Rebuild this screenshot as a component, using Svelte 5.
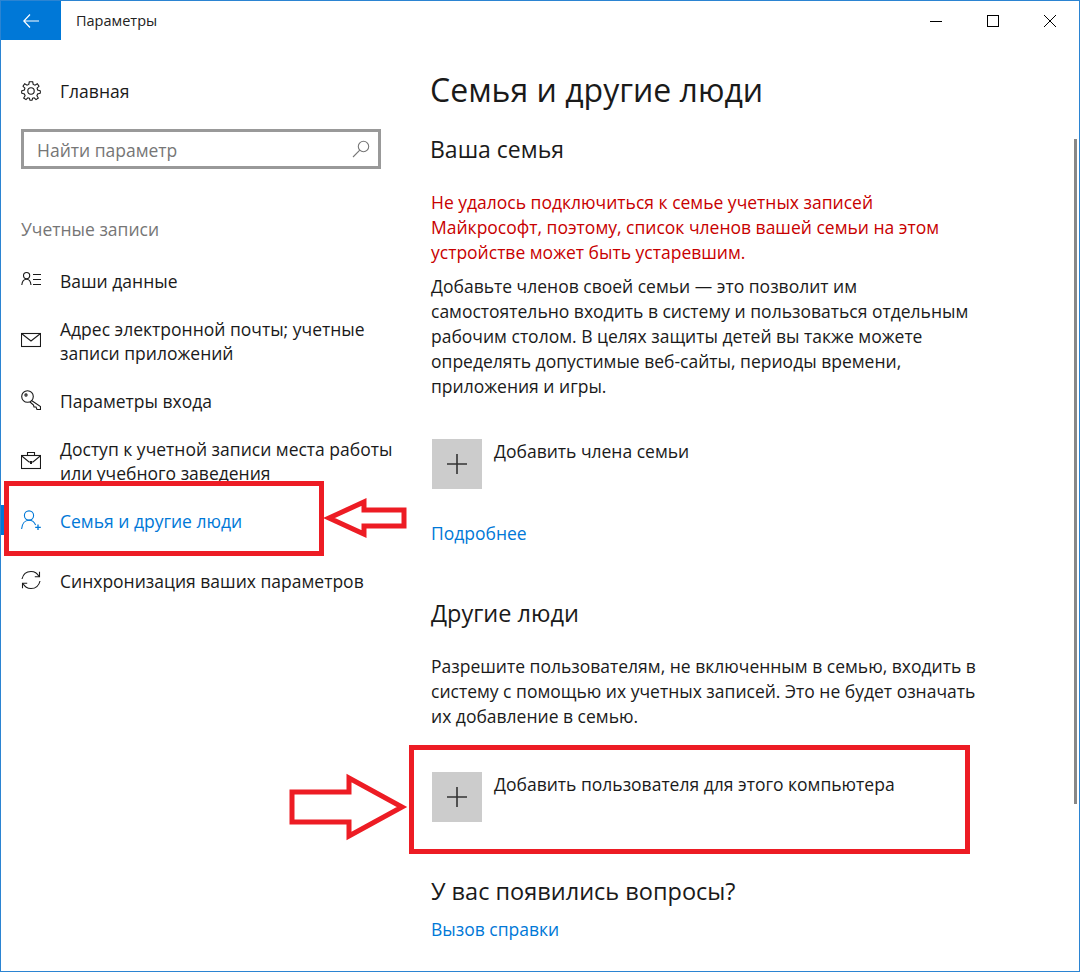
<script>
	const navItems = [
		{ id: 'data', lines: 'Ваши данные' },
		{ id: 'mail', lines: 'Адрес электронной почты; учетные записи приложений' },
		{ id: 'key', lines: 'Параметры входа' },
		{ id: 'work', lines: 'Доступ к учетной записи места работы или учебного заведения' },
		{ id: 'family', lines: 'Семья и другие люди', active: true },
		{ id: 'sync', lines: 'Синхронизация ваших параметров' }
	];
</script>

{#snippet icon(id)}
	<svg class="nav-icon" viewBox="0 0 20 20" fill="none" stroke="currentColor" stroke-width="1.1">
		{#if id === 'data'}
			<circle cx="5.6" cy="5.6" r="3.1" />
			<path d="M0.8 15 C1.2 11 3 9.3 5.6 9.3 C8.2 9.3 9.6 11 10 15" />
			<path d="M12 4.5H20M12 9.5H20M12 14.5H20" />
		{:else if id === 'mail'}
			<rect x="0.5" y="3.5" width="19" height="13" />
			<path d="M0.8 3.8 L10 11 L19.2 3.8" />
		{:else if id === 'key'}
			<circle cx="6.5" cy="6.5" r="5.8" />
			<circle cx="5" cy="5" r="1.1" />
			<path d="M10.5 10.5 L19.5 16.5 V19.5 H16 L15 17 H13 L12.5 15 L9 12" />
		{:else if id === 'work'}
			<rect x="0.5" y="5.5" width="19" height="13" />
			<path d="M6.5 5.5V2.5H13.5V5.5M0.8 6 L8 12 H12 L19.2 6" />
			<path d="M10 11V14" stroke-width="2" />
		{:else if id === 'family'}
			<circle cx="8" cy="5.5" r="4.6" />
			<path d="M0.6 19 C1 13.5 4 10.2 8 10.2 C11 10.2 13.4 12 14.6 15" />
			<path d="M17 14.5V20M14.2 17.3H19.8" stroke-width="1.3" />
		{:else}
			<path d="M1 9 C2 4.5 5.5 1.5 10 1.5 C13.5 1.5 16.5 3.5 18 6.5" />
			<path d="M18.5 1.8V6.8H13.8" />
			<path d="M19 11 C18 15.5 14.5 18.5 10 18.5 C6.5 18.5 3.5 16.5 2 13.5" />
			<path d="M1.5 18.2V13.2H6.2" />
		{/if}
	</svg>
{/snippet}

{#snippet addButton(label)}
	<div class="add">
		<span class="tile">
			<svg viewBox="0 0 20 20" width="20" height="20" stroke="#333" stroke-width="1.6">
				<path d="M10 0V20M0 10H20" />
			</svg>
		</span>
		<span class="add-label">{label}</span>
	</div>
{/snippet}

<div class="window">
	<header class="titlebar">
		<div class="back">
			<svg viewBox="0 0 16 14" width="16" height="14" fill="none" stroke="#fff" stroke-width="1.2">
				<path d="M0.5 7H16M7 0.5L0.8 7L7 13.5" />
			</svg>
		</div>
		<span class="title">Параметры</span>
		<div class="controls">
			<svg viewBox="0 0 12 12" width="12" height="12" stroke="#000" fill="none">
				<path d="M0 6.5H12" />
			</svg>
			<svg viewBox="0 0 12 12" width="12" height="12" stroke="#000" fill="none">
				<rect x="0.5" y="0.5" width="11" height="11" />
			</svg>
			<svg viewBox="0 0 12 12" width="12" height="12" stroke="#000" fill="none">
				<path d="M0 0L12 12M12 0L0 12" />
			</svg>
		</div>
	</header>

	<div class="body">
		<aside class="sidebar">
			<div class="home">
				<svg class="nav-icon" viewBox="0 0 20 20" fill="none" stroke="currentColor" stroke-width="1.1">
					<circle cx="10" cy="10" r="3.2" />
					<path d="M8.3 0.8H11.7L12.2 3.4L14 4.2L16.3 2.8L18 5.3L16.1 7.2L16.6 9L19.3 9.8V12.2L16.6 13L15.9 14.8L17.3 17L15 18.6L13.2 16.8L11.6 17.3L11 19.3H9L8.4 17.3L6.8 16.8L5 18.6L2.7 17L4.1 14.8L3.4 13L0.7 12.2V9.8L3.4 9L3.9 7.2L2 5.3L3.7 2.8L6 4.2L7.8 3.4Z" />
				</svg>
				<span class="nudge">Главная</span>
			</div>

			<div class="search">
				<span class="nudge">Найти параметр</span>
				<svg viewBox="0 0 18 18" width="18" height="18" fill="none" stroke="#777" stroke-width="1.1">
					<circle cx="11.5" cy="6.5" r="5.2" />
					<path d="M7.8 10.2L1 17" />
				</svg>
			</div>

			<div class="group nudge">Учетные записи</div>

			<nav class="nav">
				{#each navItems as item (item.id)}
					<div class="nav-item" class:active={item.active}>
						{@render icon(item.id)}
						<span class="nudge">{item.lines}</span>
					</div>
				{/each}
			</nav>
		</aside>

		<main class="content">
			<h1>Семья и другие люди</h1>
			<h2 class="family-head">Ваша семья</h2>
			<p class="error">Не удалось подключиться к семье учетных записей Майкрософт, поэтому, список членов вашей семьи на этом устройстве может быть устаревшим.</p>
			<p class="intro">Добавьте членов своей семьи — это позволит им самостоятельно входить в систему и пользоваться отдельным рабочим столом. В целях защиты детей вы также можете определять допустимые веб-сайты, периоды времени, приложения и игры.</p>
			{@render addButton('Добавить члена семьи')}
			<a class="link more" href="#more">Подробнее</a>
			<h2 class="others-head">Другие люди</h2>
			<p class="others">Разрешите пользователям, не включенным в семью, входить в систему с помощью их учетных записей. Это не будет означать их добавление в семью.</p>
			{@render addButton('Добавить пользователя для этого компьютера')}
			<h2 class="help-head">У вас появились вопросы?</h2>
			<a class="link help" href="#help">Вызов справки</a>
		</main>
	</div>

	<div class="scrollbar"></div>
	<div class="mark mark-nav"></div>
	<div class="mark mark-add"></div>
	<svg class="arrows" viewBox="0 0 1080 972" fill="none" stroke="#ed1c24" stroke-width="5" stroke-linejoin="miter">
		<path d="M329 518L364 502V510H404V526H364V534Z" />
		<path d="M292 792H349V778L402 807L349 836V822H292Z" />
	</svg>
</div>

<style>
	:global(body) {
		margin: 0;
		background: #fff;
	}

	.window {
		position: relative;
		width: 1080px;
		height: 972px;
		box-sizing: border-box;
		border: 1px solid #2b84d2;
		overflow: hidden;
		font-family: 'Open Sans', 'Noto Sans', sans-serif;
		font-size: 17.5px;
		line-height: 25px;
		color: #1a1a1a;
		background: #fff;
	}

	.titlebar {
		display: flex;
		align-items: center;
		height: 39px;
	}

	.back {
		display: flex;
		align-items: center;
		justify-content: center;
		width: 60px;
		height: 39px;
		background: #0078d7;
	}

	.title {
		margin-left: 15px;
		font-size: 14.5px;
		color: #222;
	}

	.controls {
		display: flex;
		gap: 45px;
		margin-left: auto;
		margin-right: 23px;
	}

	.body {
		display: flex;
	}

	.sidebar {
		width: 429px;
		flex: none;
		padding: 38px 0 0 20px;
		box-sizing: border-box;
	}

	.nudge {
		padding-top: 2px;
	}

	.home {
		display: flex;
		align-items: center;
		height: 25px;
	}

	.nav-icon {
		flex: none;
		width: 20px;
		height: 20px;
		margin-right: 19px;
	}

	.search {
		display: flex;
		align-items: center;
		justify-content: space-between;
		width: 360px;
		height: 40px;
		margin-top: 26px;
		padding: 0 8px 0 13px;
		box-sizing: border-box;
		border: 3px solid #999;
		color: #767676;
	}

	.group {
		margin-top: 46px;
		color: #767676;
	}

	.nav {
		margin-top: 8px;
	}

	.nav-item {
		display: flex;
		align-items: center;
		position: relative;
		height: 60px;
		width: 380px;
		line-height: 24px;
	}

	.active {
		color: #0078d7;
	}

	.active::before {
		content: '';
		position: absolute;
		left: -20px;
		top: 15px;
		width: 4px;
		height: 30px;
		background: #0078d7;
	}

	.content {
		flex: 1;
		padding-right: 102px;
	}

	h1 {
		margin: 28px 0 0;
		font-size: 32px;
		line-height: 44px;
		font-weight: 400;
	}

	h2 {
		margin: 0;
		font-size: 23.5px;
		line-height: 30px;
		font-weight: 400;
	}

	p {
		margin: 0;
		padding-left: 1px;
	}

	.family-head {
		margin-top: 22px;
		font-size: 23px;
	}

	.error {
		margin-top: 26px;
		color: #c80000;
	}

	.intro {
		margin-top: 9px;
	}

	.add {
		display: flex;
		margin-top: 40px;
		margin-left: 2px;
	}

	.tile {
		display: flex;
		align-items: center;
		justify-content: center;
		width: 50px;
		height: 50px;
		background: #ccc;
	}

	.add-label {
		margin-left: 12px;
	}

	.link {
		display: block;
		margin-left: 1px;
		color: #0078d7;
		text-decoration: none;
	}

	.more {
		margin-top: 32px;
	}

	.others-head {
		margin-top: 52px;
		padding-left: 1px;
	}

	.others {
		margin-top: 26px;
	}

	.others + .add {
		margin-top: 43px;
	}

	.help-head {
		margin-top: 54px;
		padding-left: 1px;
	}

	.help {
		margin-top: 11px;
	}

	.scrollbar {
		position: absolute;
		left: 1073px;
		top: 138px;
		width: 3px;
		height: 665px;
		background: #888;
	}

	.mark {
		position: absolute;
		box-sizing: border-box;
		border: 5px solid #ed1c24;
	}

	.mark-nav {
		left: 3px;
		top: 480px;
		width: 320px;
		height: 75px;
	}

	.mark-add {
		left: 408px;
		top: 744px;
		width: 561px;
		height: 109px;
	}

	.arrows {
		position: absolute;
		left: -1px;
		top: -1px;
		width: 1080px;
		height: 972px;
		pointer-events: none;
	}
</style>
